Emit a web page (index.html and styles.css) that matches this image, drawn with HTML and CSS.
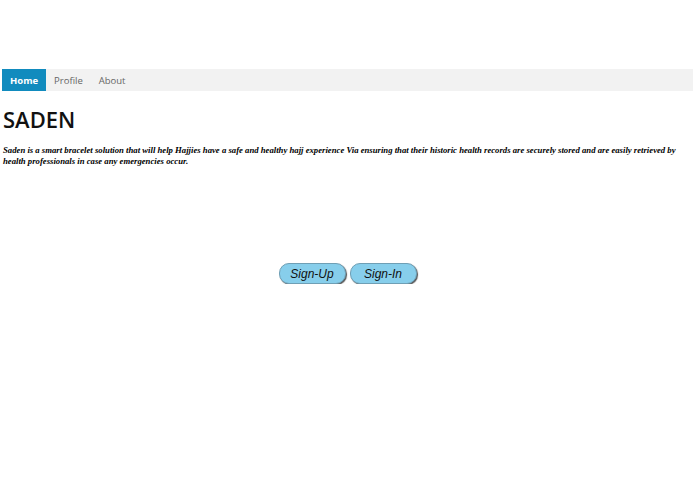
FILE: index.html
```html
<!DOCTYPE html>
<html>
<head>
<meta charset="utf-8">
<link rel="stylesheet" href="styles.css">
</head>
<body>
<div class="page">
  <nav class="topnav">
    <a class="nav-link active" href="#">Home</a>
    <a class="nav-link" href="#">Profile</a>
    <a class="nav-link" href="#">About</a>
  </nav>
  <h1 class="title">SADEN</h1>
  <p class="intro">Saden is a smart bracelet solution that will help Hajjies have a safe and healthy hajj experience Via ensuring that their historic health records are securely stored and are easily retrieved by health professionals in case any emergencies occur.</p>
  <div class="actions">
    <button class="pill">Sign-Up</button>
    <button class="pill">Sign-In</button>
  </div>
</div>
</body>
</html>
```

FILE: styles.css
```css
html, body {
  margin: 0;
  padding: 0;
  background: #ffffff;
}

.page {
  padding: 69px 2px 0 2px;
}

.topnav {
  display: flex;
  background: #f2f2f2;
  height: 22px;
}

.nav-link {
  display: flex;
  align-items: center;
  padding: 0 8px;
  font-family: "Open Sans", sans-serif;
  font-size: 9.5px;
  color: #666666;
  text-decoration: none;
}

.nav-link.active {
  background: #118bbe;
  color: #ffffff;
  font-weight: bold;
}

.title {
  margin: 13px 0 0 1px;
  font-family: "Open Sans", sans-serif;
  font-weight: 600;
  font-size: 22px;
  line-height: 30px;
  color: #111111;
}

.intro {
  margin: 11px 0 0 1px;
  font-family: "Liberation Serif", serif;
  font-style: italic;
  font-weight: bold;
  font-size: 8.7px;
  line-height: 11px;
  color: #000000;
}

.actions {
  display: flex;
  justify-content: center;
  gap: 4px;
  margin-top: 96px;
}

.pill {
  width: 67px;
  height: 21px;
  border: 1px solid #6f9fb5;
  border-radius: 10px;
  background: #87ceeb;
  box-shadow: 1px 1px 1px #555555;
  font-family: "Liberation Sans", sans-serif;
  font-style: italic;
  font-size: 12px;
  color: #111111;
  padding: 0;
}
```
